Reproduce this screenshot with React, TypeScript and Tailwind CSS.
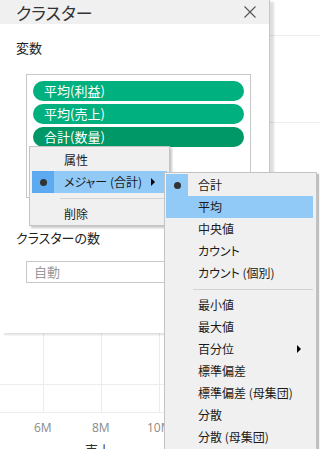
type MenuItem = {
    label: string;
    checked?: boolean;
    active?: boolean;
    submenu?: boolean;
};

const aggregations: (MenuItem | "sep")[] = [
    { label: "合計", checked: true },
    { label: "平均", active: true },
    { label: "中央値" },
    { label: "カウント" },
    { label: "カウント (個別)" },
    "sep",
    { label: "最小値" },
    { label: "最大値" },
    { label: "百分位", submenu: true },
    { label: "標準偏差" },
    { label: "標準偏差 (母集団)" },
    { label: "分散" },
    { label: "分散 (母集団)" },
];

function Arrow() {
    return <span className="ml-auto mr-[12px] h-0 w-0 border-y-[4px] border-l-[4px] border-y-transparent border-l-black"></span>;
}

function Bullet() {
    return <span className="h-[7px] w-[7px] rounded-full bg-[#333]"></span>;
}

function ChartBackdrop() {
    return (
        <div className="absolute inset-0">
            <svg width="320" height="449" className="absolute left-0 top-0">
                <g stroke="#ececec" strokeWidth="1">
                    <line x1="270" y1="35.5" x2="320" y2="35.5" />
                    <line x1="270" y1="122.5" x2="320" y2="122.5" />
                    <line x1="43.5" y1="333" x2="43.5" y2="413" />
                    <line x1="101.5" y1="333" x2="101.5" y2="413" />
                    <line x1="159.5" y1="333" x2="159.5" y2="413" />
                    <line x1="0" y1="384.5" x2="170" y2="384.5" />
                    <line x1="0" y1="412.5" x2="170" y2="412.5" />
                </g>
            </svg>
            {/* axis labels */}
            <span className="absolute left-[34px] top-[420px] font-['Open_Sans',sans-serif] text-[12px] leading-[16px] text-[#8a8a8a]">6M</span>
            <span className="absolute left-[92px] top-[420px] font-['Open_Sans',sans-serif] text-[12px] leading-[16px] text-[#8a8a8a]">8M</span>
            <span className="absolute left-[147px] top-[420px] font-['Open_Sans',sans-serif] text-[12px] leading-[16px] text-[#8a8a8a]">10M</span>
            <span className="absolute left-[85px] top-[442px] text-[13px] leading-[16px] text-[#333]">売上</span>
        </div>
    );
}

function Dialog() {
    return (
        <div className="absolute left-0 top-0 h-[333px] w-[270px] border-r border-[#c6c6c6] bg-white shadow-[4px_2px_2px_rgba(0,0,0,0.13)]">

            {/* Header */}

            <div className="flex h-[24px] items-center justify-between bg-[#f0f0f0] pl-[16px] pr-[13px]">
                <span className="text-[17px] leading-none text-[#333]">クラスター</span>
                <svg width="12" height="12" viewBox="0 0 12 12">
                    <path d="M0.5 0.5 L11.5 11.5 M11.5 0.5 L0.5 11.5" stroke="#555" strokeWidth="1.1" fill="none" />
                </svg>
            </div>

            {/* Variables */}

            <div className="mt-[15px] pl-[16px] text-[13px] leading-[18px]">変数</div>
            <div className="ml-[26px] mt-[17px] flex h-[124px] w-[225px] flex-col gap-[3px] border border-[#c8c8c8] px-[6px] pt-[6px]">
                <div className="flex h-[20px] items-center rounded-full bg-[#00b17f] pl-[11px] text-[13px] text-white">平均(利益)</div>
                <div className="flex h-[20px] items-center rounded-full bg-[#00b17f] pl-[11px] text-[13px] text-white">平均(売上)</div>
                <div className="flex h-[20px] items-center rounded-full bg-[#009866] pl-[11px] text-[13px] text-white">合計(数量)</div>
            </div>

            {/* Cluster count */}

            <div className="mt-[31px] pl-[16px] text-[13px] leading-[18px]">クラスターの数</div>
            <div className="ml-[26px] mt-[14px] flex h-[22px] w-[225px] items-center border border-[#c8c8c8] pl-[7px] text-[13px] text-[#9a9a9a]">自動</div>
        </div>
    );
}

function ContextMenu() {
    return (
        <div className="absolute left-[29px] top-[146px] w-[141px] border border-[#c4c4c4] bg-[#f0f0f0] px-[2px] pt-[2px] text-[12px] text-[#1a1a1a] shadow-[2px_2px_2px_rgba(0,0,0,0.22)]">
            <div className="flex h-[22px] items-center">
                <span className="w-[22px]"></span>
                <span className="pl-[10px]">属性</span>
            </div>
            <div className="flex h-[22px] items-center bg-[#91c9f7]">
                <span className="flex h-full w-[22px] items-center justify-center bg-[#5eaaf1]">
                    <Bullet />
                </span>
                <span className="pl-[10px]">メジャー (合計)</span>
                <Arrow />
            </div>
            <div className="flex h-[10px] items-center pl-[28px]">
                <div className="h-px flex-1 bg-[#d2d2d2]"></div>
            </div>
            <div className="flex h-[22px] items-center">
                <span className="w-[22px]"></span>
                <span className="pl-[10px]">削除</span>
            </div>
        </div>
    );
}

function AggregationMenu() {
    return (
        <div className="absolute left-[164px] top-[172px] h-[290px] w-[153px] border border-[#c4c4c4] bg-[#f0f0f0] pl-[1px] pr-[3px] pt-[1px] text-[12px] text-[#1a1a1a] shadow-[2px_2px_1px_rgba(0,0,0,0.25)]">
            {aggregations.map((item, i) =>
                item === "sep" ? (
                    <div key={i} className="flex h-[10px] items-center pl-[27px]">
                        <div className="h-px flex-1 bg-[#d2d2d2]"></div>
                    </div>
                ) : (
                    <div key={i} className={`flex h-[22px] items-center ${item.active ? "bg-[#91c9f7]" : ""}`}>
                        <span className={`flex h-full w-[22px] items-center justify-center ${item.checked ? "bg-[#91c9f7]" : ""}`}>
                            {item.checked && <Bullet />}
                        </span>
                        <span className="pl-[10px]">{item.label}</span>
                        {item.submenu && <Arrow />}
                    </div>
                )
            )}
        </div>
    );
}

function App() {
    return (
        <div className="relative h-[449px] w-[320px] overflow-hidden bg-white font-['Noto_Sans_CJK_JP','Noto_Sans',sans-serif] text-[#222] [font-feature-settings:'palt']">
            <ChartBackdrop />
            <Dialog />
            <ContextMenu />
            <AggregationMenu />
        </div>
    );
}

export default App;
